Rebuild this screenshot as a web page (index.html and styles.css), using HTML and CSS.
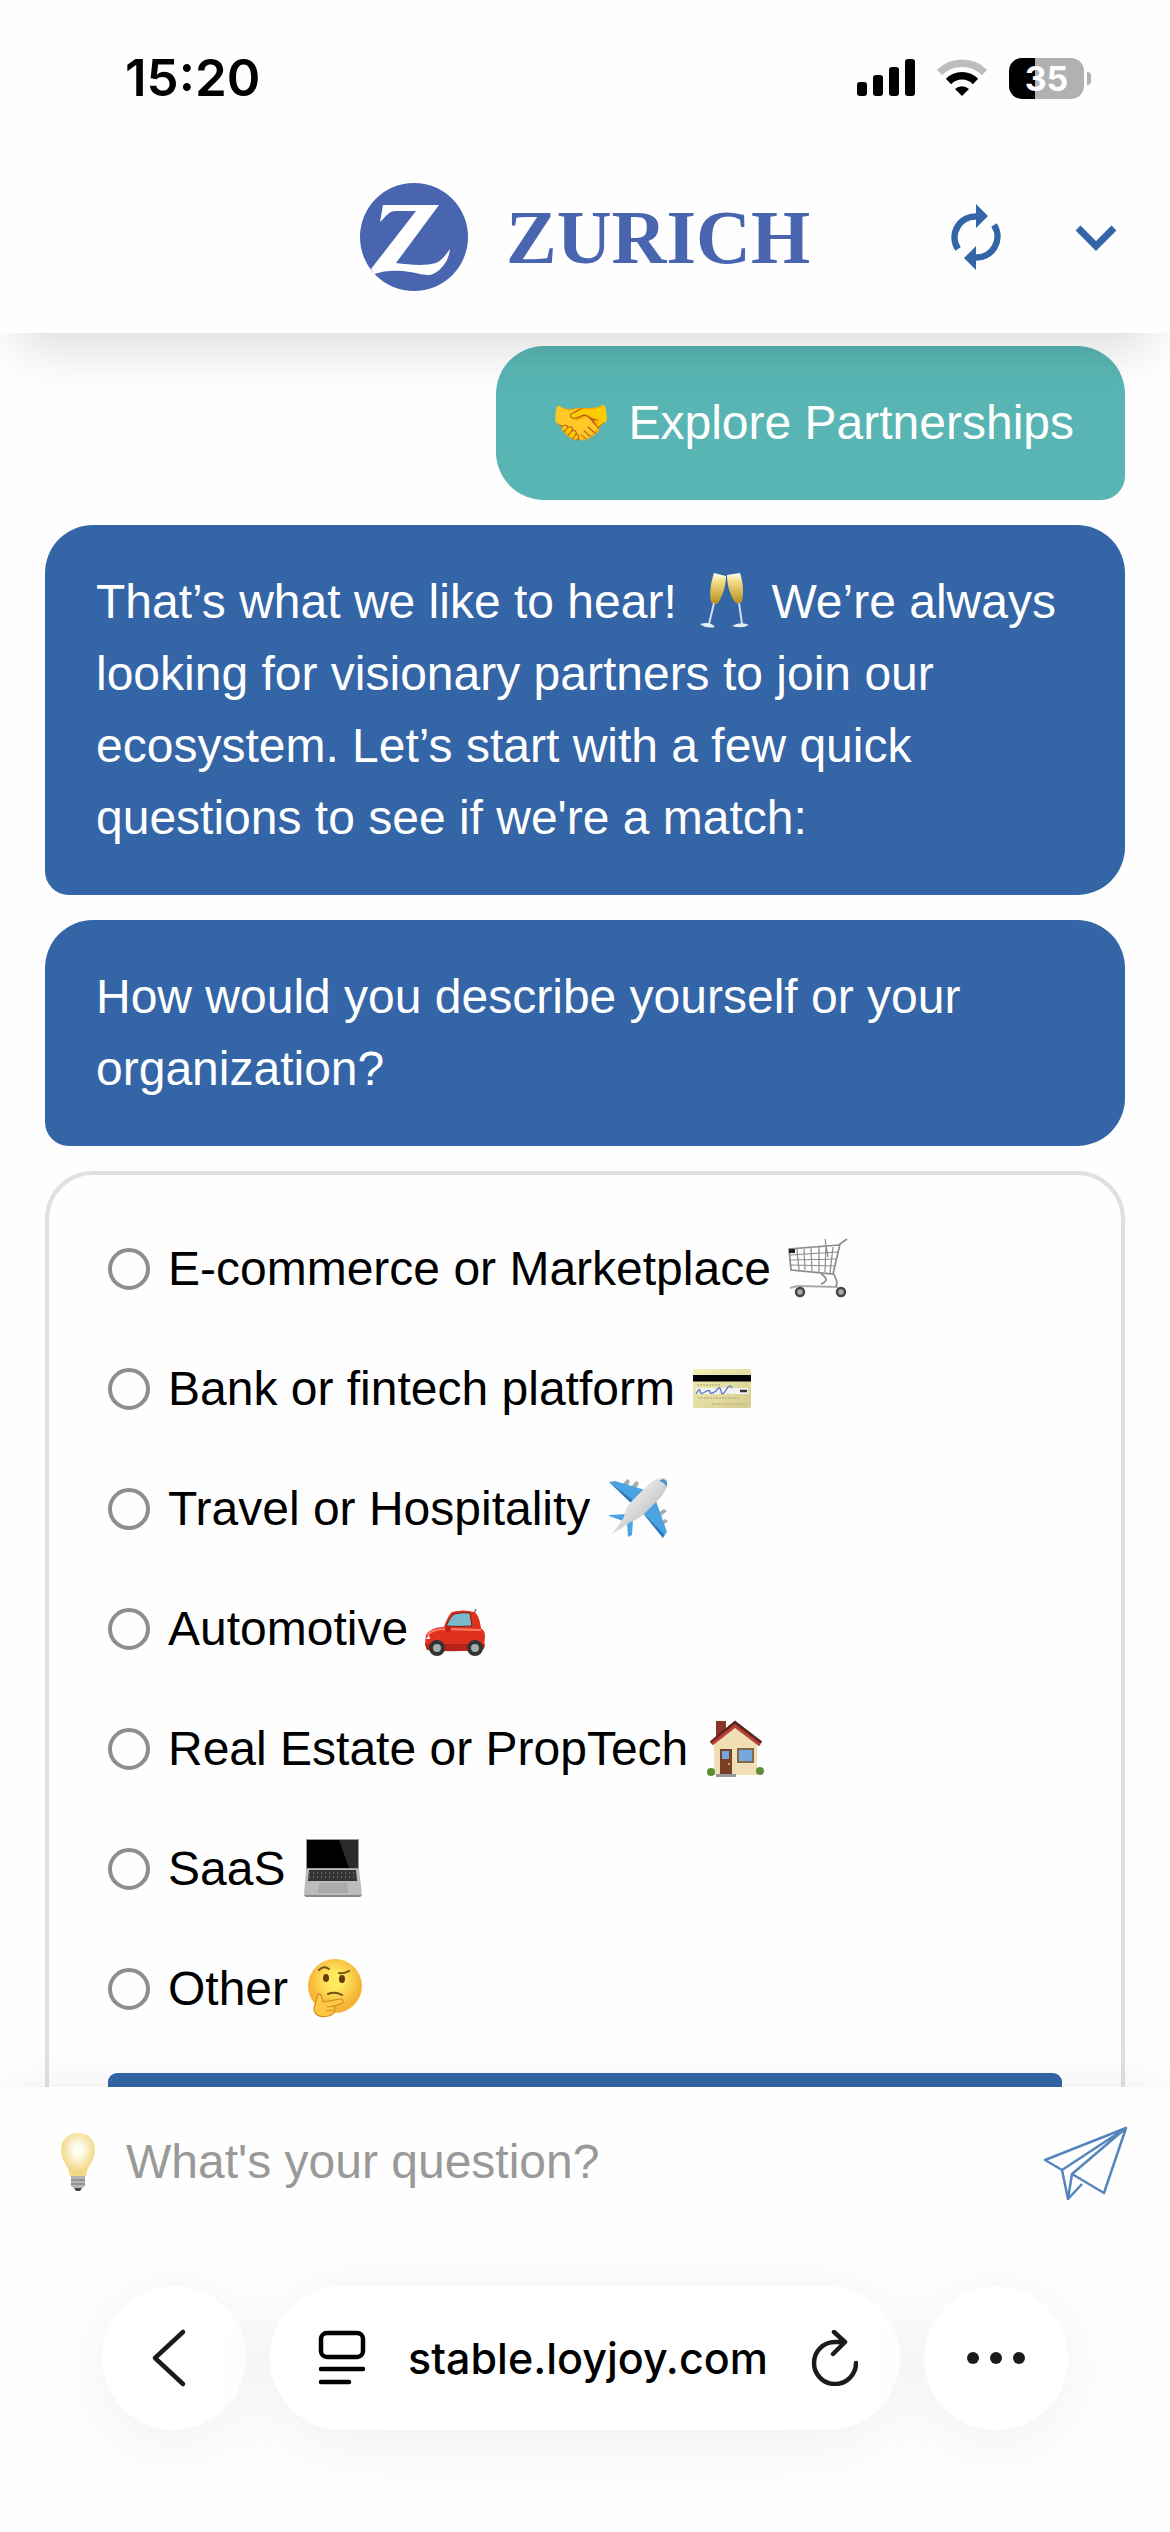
FILE: index.html
```
<!DOCTYPE html>
<html lang="en">
<head>
<meta charset="utf-8">
<meta name="viewport" content="width=device-width, initial-scale=1">
<title>Zurich Chat</title>
<link rel="stylesheet" href="styles.css">
</head>
<body>
<header class="top">
  <div class="status">
    <time class="clock">15:20</time>
    <div class="indicators">
      <svg class="signal" viewBox="0 0 58 38" aria-hidden="true"><rect x="0" y="23" width="10" height="14" rx="3"/><rect x="16" y="16" width="10" height="21" rx="3"/><rect x="32" y="8" width="10" height="29" rx="3"/><rect x="48" y="0" width="10" height="37" rx="3"/></svg>
      <svg class="wifi" viewBox="0 0 50 38" aria-hidden="true"><path d="M2.500 13.500A32 32 0 0 1 47.500 13.500" fill="none" stroke="#bdbdbd" stroke-width="7.500"/><path d="M11.500 22.500A19 19 0 0 1 38.500 22.500" fill="none" stroke="#000" stroke-width="7.500"/><path d="M25 37l-7-7a10 10 0 0 1 14 0z"/></svg>
      <span class="battery">35</span>
    </div>
  </div>
  <div class="brandbar">
    <div class="logo">
      <svg class="emblem" viewBox="0 0 108 108" aria-hidden="true"><circle cx="54" cy="54" r="54" fill="#4965af"/><path d="M23 22H79L36 80C50 82 66 83 76 80 83 77 86 71 90 66 89 77 82 87 73 91 67 94 55 89 43 88 32 87 23 88 14 91L11 86 56 28H36C28 28 26 34 20 39Z" fill="#fff"/></svg>
      <span class="wordmark">ZURICH</span>
    </div>
    <div class="actions">
      <button class="icon-btn" type="button" aria-label="Restart"><svg viewBox="0 0 72 72"><path d="M18 48A21 21 0 0 1 37 15.500M54 24A21 21 0 0 1 35 56.500" fill="none" stroke="#3465a7" stroke-width="6.500"/><path d="M36 3v24l12-12zM36 69V45L24 57z" fill="#3465a7"/></svg></button>
      <button class="icon-btn" type="button" aria-label="Minimize"><svg viewBox="0 0 72 72"><path d="M18 27l18 18 18-18" fill="none" stroke="#3465a7" stroke-width="7"/></svg></button>
    </div>
  </div>
</header>

<main class="chat">
  <p class="bubble user"><span class="emoji">🤝</span> Explore Partnerships</p>
  <p class="bubble bot">That’s what we like to hear! <svg class="emoji" viewBox="0 0 60 60" role="img" aria-label="🥂"><defs><linearGradient id="wine" x1="0" x2="0" y1="0" y2="1"><stop offset="0" stop-color="#fff"/><stop offset=".25" stop-color="#f3e08a"/><stop offset="1" stop-color="#b58e1c"/></linearGradient></defs><path d="M20 2l12 3c0 9-3 20-8 27-1 2-6 1-7-1-2-9 0-20 3-29zM33 4l13-2c3 9 4 19 2 28-1 3-6 3-7 1-5-7-8-17-8-27z" fill="url(#wine)"/><path d="M20 32L15 53M45 32l3 21" stroke="#cfdcf0" stroke-width="2" fill="none"/><path d="M6 53q10-3 15 3-9 2-15-3zM38 55q8-5 17-1-7 4-17 1z" fill="#e8eef8"/></svg> We’re always looking for visionary partners to join our ecosystem. Let’s start with a few quick questions to see if we're a match:</p>
  <p class="bubble bot">How would you describe yourself or your organization?</p>
  <form class="card">
    <label class="option"><input type="radio" name="kind"><span>E-commerce or Marketplace <svg class="emoji" viewBox="0 0 60 60" role="img" aria-label="🛒"><g fill="none" stroke="#8b8b8b" stroke-width="1.200"><path d="M2 17l48-3M3 22l46-1M3 27l44 1M9 11l2 21M16 11l1 21M23 10l1 23M31 9l0 25M38 9l-1 25M45 9l-3 26M37 1l3 18"/><path d="M59 1l-7 5-7 30-42-4-2-21 50-4M33 36q10 6 0 10M46 36l3 8-1 5" stroke-width="1.700"/><path d="M2 50l8-2 40 1" stroke="#aaa" stroke-width="2"/></g><path d="M1 11h6v4H1z" fill="#222"/><circle cx="12" cy="54" r="4" fill="#aaa" stroke="#444" stroke-width="2.500"/><circle cx="53" cy="54" r="4" fill="#aaa" stroke="#444" stroke-width="2.500"/></svg></span></label>
    <label class="option"><input type="radio" name="kind"><span>Bank or fintech platform <svg class="emoji" viewBox="0 0 60 60" role="img" aria-label="💳"><defs><linearGradient id="gold" x1="0" x2="1" y1="0" y2="1"><stop offset="0" stop-color="#f3efb8"/><stop offset="1" stop-color="#d6cb8e"/></linearGradient></defs><rect x="1" y="11" width="58" height="39" rx="2" fill="url(#gold)"/><path d="M1 17h58v6.500H1z"/><path d="M4 30h52v6H4z" fill="#f3f3f6"/><path d="M4 36q4-7 4-3t5 1 5 0 6-1q4-6 5 0t5-1 6-2" fill="none" stroke="#5a73c8" stroke-width="1.300"/><path d="M48 33h7" stroke="#333" stroke-width="2.500"/><path d="M5 27h23M6 40h42M20 46h34" stroke="#bdb483" stroke-width="1.500" stroke-dasharray="2 1"/></svg></span></label>
    <label class="option"><input type="radio" name="kind"><span>Travel or Hospitality <svg class="emoji" viewBox="0 0 60 60" role="img" aria-label="✈️"><defs><linearGradient id="hull" x1="0" x2="1" y1="0" y2="1"><stop offset=".2" stop-color="#f6f6f6"/><stop offset=".8" stop-color="#b9b9b9"/></linearGradient></defs><path d="M15 6l4-5 3 2-2 5zM23 9l5-6 3 2-3 6zM50 35l6-4 3 2-7 6zM52 45l5-4 3 2-6 5z" fill="#aaa"/><path d="M1 4l6-1 30 9-12 14zM48 23l11 31-4 6-21-26zM1 37l17-1-3 7-14-5zM19 45l6-3-1 15-4 2z" fill="#4ba3e2"/><path d="M1 4l23 22 2-3zM34 34l21 26 1-4z" fill="#2f78b8"/><path d="M4 56q7-9 12-17 1-9 7-15L42 5Q52-2 58 1q4 6-4 17L36 36q-7 6-14 8-7 6-18 12z" fill="url(#hull)"/><path d="M55 1q5 1 4 8-3-5-8-6z" fill="#4b91c9"/></svg></span></label>
    <label class="option"><input type="radio" name="kind"><span>Automotive <svg class="emoji" viewBox="0 0 60 60" role="img" aria-label="🚗"><path d="M49 16l2-5" stroke="#777" stroke-width="1.500"/><path d="M0 46l1-9q5-8 18-8 4-12 8-15 11-3 22 0 5 2 7 16 4 3 4 8l-1 13q-14 3-57 1z" fill="#e0301e"/><path d="M0 46h60l-1 5q-28 4-57 1z" fill="#b8231a"/><path d="M2 37q6-6 18-6l36 1" stroke="#ff7d66" stroke-width="2" fill="none"/><path d="M21 28q4-9 8-12 8-2 16-1l2 13q-12 1-26 0z" fill="#79b9c8" stroke="#801710" stroke-width="1"/><path d="M1 41l3-4 1 4z" fill="#fff"/><circle cx="23" cy="31" r="3" fill="#c32015"/><g fill="#aaa" stroke="#333" stroke-width="4"><circle cx="12" cy="50" r="6"/><circle cx="50" cy="50" r="6"/></g></svg></span></label>
    <label class="option"><input type="radio" name="kind"><span>Real Estate or PropTech <svg class="emoji" viewBox="0 0 60 60" role="img" aria-label="🏡"><path d="M10 3h10v18H10z" fill="#8b3527"/><path d="M8 25L29 5l22 20v32H8z" fill="#f0deb5"/><path d="M5 25L29 5l26 20" fill="none" stroke="#5e2520" stroke-width="4"/><path d="M6 26L29 8l25 19" fill="none" stroke="#b64035" stroke-width="3"/><path d="M14 31h12v25H14z" fill="#774027"/><path d="M16 33h7v8h-7zM33 32h13v12H33z" fill="#75a9de"/><path d="M32 31h15v13H32z" fill="none" stroke="#82684f" stroke-width="2"/><path d="M10 56h20v3H10z" fill="#999"/><g fill="#5c8e37"><circle cx="5" cy="54" r="4"/><circle cx="54" cy="53" r="4"/></g><circle cx="23" cy="46" r="1" fill="#f4ce61"/></svg></span></label>
    <label class="option"><input type="radio" name="kind"><span>SaaS <svg class="emoji" viewBox="0 0 60 60" role="img" aria-label="💻"><path d="M3 1h53v30H3z" fill="#9a9a9a"/><path d="M4 2h51v28H4z"/><path d="M36 2h19v28h-9z" fill="#2b2b2b"/><path d="M3 31h53l3 26-2 2H3l-2-2z" fill="#bcbcbc"/><path d="M6 32h47l1 11H5z" fill="#343434"/><path d="M6 35h48M6 39h48" stroke="#999" stroke-width="1" stroke-dasharray="1 3"/><path d="M16 45h28l1 10H15z" fill="#aaa"/><path d="M1 57h58l-2 2H3z" fill="#888"/></svg></span></label>
    <label class="option"><input type="radio" name="kind"><span>Other <svg class="emoji" viewBox="0 0 60 60" role="img" aria-label="🤔"><defs><radialGradient id="face" cy=".4"><stop offset=".3" stop-color="#ffe95c"/><stop offset="1" stop-color="#f5b335"/></radialGradient></defs><circle cx="30" cy="28" r="27" fill="url(#face)"/><g fill="#633b10"><ellipse cx="21" cy="20" rx="3" ry="4"/><ellipse cx="37" cy="21" rx="3" ry="4"/></g><path d="M14 12q5-5 10-1M34 15q5 1 10-2M23 36q7-3 14 1" fill="none" stroke="#75501a" stroke-width="2" stroke-linecap="round"/><path d="M13 36c3-1 4 3 5 8l17-3c4 0 4 4 0 5l-6 2c2 5 0 9-6 10-8 2-14-1-14-8z" fill="#fbc944" stroke="#d98b20" stroke-width="1.200"/><path d="M22 49l8-1M21 53l8-1" stroke="#d98b20" stroke-width="1"/></svg></span></label>
    <button class="submit" type="button" aria-label="Continue"></button>
  </form>
</main>

<form class="composer">
  <svg class="bulb" viewBox="0 0 36 60" aria-hidden="true"><defs><radialGradient id="glow" cy=".4"><stop offset=".2" stop-color="#fffef4"/><stop offset="1" stop-color="#f2d987"/></radialGradient></defs><path d="M18 1C8 1 1 8 1 18c0 11 8 16 9 26h16c1-10 9-15 9-26C35 8 28 1 18 1z" fill="url(#glow)"/><path d="M11 44h14v10l-3 2H14l-3-2z" fill="#b5b5b5"/><path d="M11 48h14M11 52h14" stroke="#888" stroke-width="1.500"/><path d="M14 56h8l-2 3h-4z" fill="#444"/></svg>
  <input class="question" type="text" placeholder="What's your question?" aria-label="What's your question?">
  <button class="send" type="button" aria-label="Send"><svg viewBox="0 0 84 76"><g fill="none" stroke="#5585bd" stroke-width="2.500" stroke-linejoin="round"><path d="M82 4L1 36l17 10zM82 4L18 46l6 29 14-15M82 4L60 69 28 50zM28 50l-4 25"/></g></svg></button>
</form>

<nav class="browser">
  <button class="round" type="button" aria-label="Back"><svg viewBox="0 0 72 72"><path d="M45 10L17 36l28 26" fill="none" stroke="#1b1b1b" stroke-width="4.500" stroke-linecap="round" stroke-linejoin="round"/></svg></button>
  <div class="address">
    <button class="mini" type="button" aria-label="Page menu"><svg viewBox="0 0 48 56"><g fill="none" stroke="#000" stroke-width="4.500" stroke-linecap="round"><rect x="3" y="3" width="42" height="24" rx="6"/><path d="M3 39h42M3 52h28"/></g></svg></button>
    <a class="url" href="#">stable.loyjoy.com</a>
    <button class="mini" type="button" aria-label="Reload"><svg viewBox="0 0 48 56"><path d="M34 12H25A21 21 0 1 0 46 33M24 2l11 10-12 12" fill="none" stroke="#1b1b1b" stroke-width="4.500" stroke-linecap="round" stroke-linejoin="round"/></svg></button>
  </div>
  <button class="round" type="button" aria-label="More"><svg viewBox="0 0 72 72"><g fill="#1b1b1b"><circle cx="13" cy="36" r="6"/><circle cx="36" cy="36" r="6"/><circle cx="59" cy="36" r="6"/></g></svg></button>
</nav>
</body>
</html>
```
FILE: styles.css
```
* { box-sizing: border-box; }

body {
  margin: 0;
  height: 100vh;
  display: flex;
  flex-direction: column;
  overflow: hidden;
  background: #fefefe;
  color: #000;
  font: 48px/72px "Liberation Sans", Arial, sans-serif;
}

button, input { font: inherit; color: inherit; border: 0; padding: 0; margin: 0; background: none; }
button svg { display: block; }

/* Header */
.top {
  position: relative;
  z-index: 2;
  flex: none;
  background: #fefefe;
  box-shadow: 0 34px 48px -20px rgba(0, 0, 0, .14);
}
.status {
  display: flex;
  align-items: center;
  justify-content: space-between;
  height: 141px;
  padding: 15px 79px 0 125px;
}
.clock { font: 600 51px/60px Inter, sans-serif; }
.indicators { display: flex; align-items: center; gap: 22px; }
.signal { width: 58px; height: 38px; }
.wifi { width: 50px; height: 38px; }
.battery {
  position: relative;
  width: 75px;
  margin-right: 7px;
  border-radius: 13px;
  background: linear-gradient(to right, #000 35%, #b1b1b1 35%);
  color: #fff;
  font: 700 34px/41px Inter, sans-serif;
  text-align: center;
}
.battery::after {
  content: "";
  position: absolute;
  left: 78px;
  top: 14px;
  width: 4px;
  height: 13px;
  border-radius: 0 4px 4px 0;
  background: #b1b1b1;
}
.brandbar {
  display: grid;
  grid-template-columns: 1fr auto 1fr;
  align-items: center;
  height: 192px;
  padding: 0 38px;
}
.logo { grid-column: 2; display: flex; align-items: center; gap: 38px; }
.emblem { width: 108px; height: 108px; }
.wordmark { color: #4965af; font: 700 76px/96px "Liberation Serif", serif; }
.actions { display: flex; justify-content: flex-end; gap: 48px; }
.icon-btn, .icon-btn svg { width: 72px; height: 72px; }

/* Conversation */
.chat {
  flex: 1;
  min-height: 0;
  overflow: hidden;
  display: flex;
  flex-direction: column;
  align-items: stretch;
  gap: 25px;
  padding: 13px 45px 0;
}
.bubble {
  flex: none;
  margin: 0;
  padding: 41px 51px;
  color: #fff;
  border-radius: 48px;
}
.bot { background: #3465a7; border-bottom-left-radius: 24px; }
.user { align-self: flex-end; background: #58b5b3; border-bottom-right-radius: 24px; }
.emoji { display: inline-block; width: 60px; margin: 0 4px; }
svg.emoji { height: 60px; vertical-align: -13px; }

.card {
  position: relative;
  flex: none;
  padding: 58px 59px;
  border: 4px solid #e0e0e0;
  border-radius: 48px;
  background: #fefefe;
}
.option { display: flex; align-items: center; gap: 18px; height: 72px; margin-bottom: 48px; }
.option input {
  appearance: none;
  width: 42px;
  height: 42px;
  border: 4px solid #8e8e8e;
  border-radius: 50%;
}
.submit { display: block; width: 100%; height: 120px; border-radius: 9px; background: #3465a7; }

/* Message entry */
.composer {
  flex: none;
  display: flex;
  align-items: center;
  height: 150px;
  padding: 0 42px 0 60px;
  background: #fefefe;
  box-shadow: 0 -8px 40px -8px rgba(0, 0, 0, .07);
  clip-path: inset(-60px 0 0 0);
}
.bulb { width: 36px; height: 60px; margin-right: 30px; }
.question { flex: 1; min-width: 0; height: 72px; outline: 0; }
.question::placeholder { color: #999; opacity: 1; }
.send, .send svg { width: 84px; height: 76px; }

/* Browser toolbar */
.browser {
  position: relative;
  flex: none;
  display: grid;
  grid-template-columns: 144px 1fr 144px;
  gap: 24px;
  padding: 49px 102px 102px;
}
.round, .address {
  display: flex;
  align-items: center;
  height: 144px;
  border-radius: 72px;
  background: #fff;
  box-shadow: 0 12px 80px rgba(0, 0, 0, .06);
}
.round { justify-content: center; }
.round svg { width: 72px; height: 72px; }
.address { justify-content: space-between; padding: 0 42px 0 48px; }
.mini, .mini svg { width: 48px; height: 56px; }
.url { color: #000; text-decoration: none; font: 500 43px/60px Inter, sans-serif; }
```
